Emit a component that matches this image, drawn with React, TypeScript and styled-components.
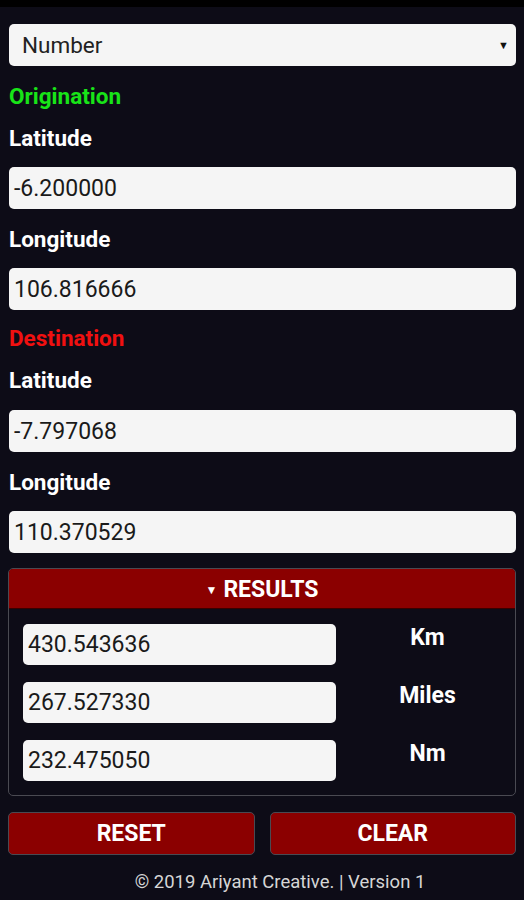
import React from "react";
import styled, { createGlobalStyle } from "styled-components";

const Global = createGlobalStyle`
  html, body { margin: 0; padding: 0; background: #0d0c17; }
  body { font-family: Roboto, "Liberation Sans", Arial, sans-serif; }
  * { box-sizing: border-box; }
`;

const TopBar = styled.div`
  height: 7px;
  background: #000;
`;

const Page = styled.div`
  display: flex;
  flex-direction: column;
  padding: 17px 9px 0 9px;
  min-height: 893px;
  background: #0d0c17;
`;

const SelectBox = styled.div`
  height: 42px;
  background: #f5f5f5;
  border-radius: 5px;
  display: flex;
  align-items: center;
  padding: 0 13px;
  font-size: 22.5px;
  color: #222;
  margin-right: -1px;
`;

const Caret = styled.span`
  margin-left: auto;
  font-size: 11px;
  color: #111;
  margin-right: -6px;
`;

const Heading = styled.div<{ $color: string; $mt: number }>`
  color: ${(p) => p.$color};
  font-weight: 700;
  font-size: 22.5px;
  height: 24px;
  line-height: 24px;
  margin-top: ${(p) => p.$mt}px;
`;

const Label = styled.div`
  color: #fff;
  font-weight: 700;
  font-size: 22.5px;
  height: 24px;
  line-height: 24px;
  margin-top: 18px;
`;

const Field = styled.div<{ $mt?: number }>`
  height: 42px;
  background: #f5f5f5;
  border-radius: 5px;
  display: flex;
  align-items: center;
  padding: 0 5px;
  font-size: 23px;
  color: #1a1a1a;
  margin-top: ${(p) => p.$mt ?? 17}px;
  margin-right: -1px;
`;

const Panel = styled.div`
  margin-top: 15px;
  margin-left: -1px;
  margin-right: -1px;
  border: 1px solid #4a4a52;
  border-radius: 5px;
  overflow: hidden;
  padding-bottom: 14px;
`;

const PanelHeader = styled.div`
  height: 40px;
  background: #8b0000;
  color: #fff;
  font-weight: 700;
  font-size: 23px;
  display: flex;
  align-items: center;
  justify-content: center;
  gap: 6px;
  border-bottom: 1px solid #3a0000;
  padding-top: 2px;
`;

const HeaderCaret = styled.span`
  font-size: 12px;
  margin-top: 1px;
`;

const ResultRows = styled.div`
  display: flex;
  flex-direction: column;
  gap: 17px;
  padding: 15px 0 0 14px;
`;

const ResultRow = styled.div`
  display: grid;
  grid-template-columns: 313px 1fr;
  align-items: start;
`;

const ResultField = styled.div`
  height: 41px;
  background: #f5f5f5;
  border-radius: 5px;
  display: flex;
  align-items: center;
  padding: 0 5px;
  font-size: 23px;
  color: #1a1a1a;
`;

const Unit = styled.div`
  color: #fff;
  font-weight: 700;
  font-size: 23px;
  text-align: center;
  line-height: 24px;
  padding: 2px 0 0 4px;
`;

const Buttons = styled.div`
  display: grid;
  grid-template-columns: 1fr 1fr;
  gap: 15px;
  margin-top: 16px;
  margin-left: -1px;
  margin-right: -1px;
`;

const Button = styled.button`
  height: 43px;
  background: #8b0000;
  border: 1px solid #4a4a52;
  border-radius: 5px;
  color: #fff;
  font-family: Roboto, "Liberation Sans", Arial, sans-serif;
  font-weight: 700;
  font-size: 23px;
  padding: 0;
`;

const Footer = styled.div`
  text-align: center;
  color: #d6d6d6;
  font-size: 18.5px;
  margin-top: 16px;
  padding-left: 36px;
`;

export default function App() {
  return (
    <>
      <Global />
      <TopBar />
      <Page>
        <SelectBox>
          Number
          <Caret>▼</Caret>
        </SelectBox>
        <Heading $color="#18e418" $mt={18}>Origination</Heading>
        <Label>Latitude</Label>
        <Field>-6.200000</Field>
        <Label>Longitude</Label>
        <Field>106.816666</Field>
        <Heading $color="#f01010" $mt={16}>Destination</Heading>
        <Label>Latitude</Label>
        <Field $mt={18}>-7.797068</Field>
        <Label>Longitude</Label>
        <Field>110.370529</Field>
        <Panel>
          <PanelHeader>
            <HeaderCaret>▼</HeaderCaret>RESULTS
          </PanelHeader>
          <ResultRows>
            <ResultRow>
              <ResultField>430.543636</ResultField>
              <Unit>Km</Unit>
            </ResultRow>
            <ResultRow>
              <ResultField>267.527330</ResultField>
              <Unit>Miles</Unit>
            </ResultRow>
            <ResultRow>
              <ResultField>232.475050</ResultField>
              <Unit>Nm</Unit>
            </ResultRow>
          </ResultRows>
        </Panel>
        <Buttons>
          <Button>RESET</Button>
          <Button>CLEAR</Button>
        </Buttons>
        <Footer>© 2019 Ariyant Creative. | Version 1</Footer>
      </Page>
    </>
  );
}
